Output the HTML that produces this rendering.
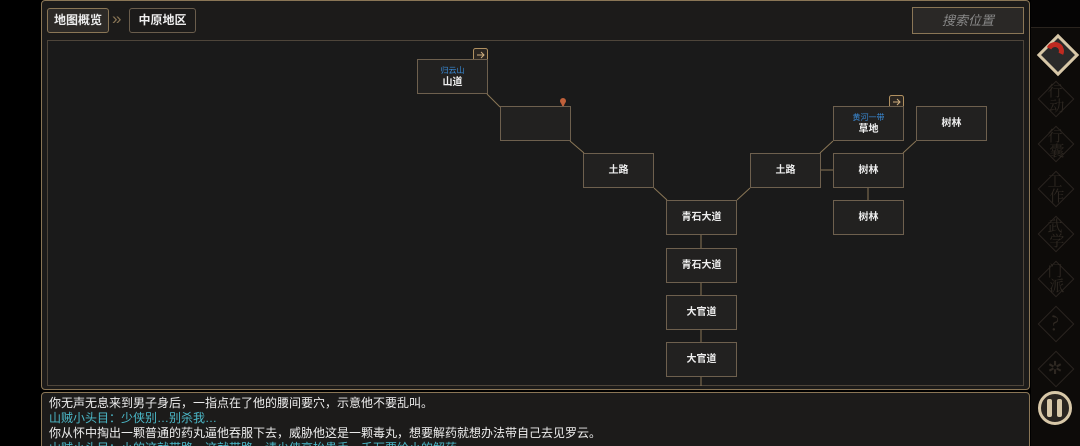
<!DOCTYPE html><html><head><meta charset="utf-8"><style>
html,body{margin:0;width:1080px;height:446px;overflow:hidden}
body{background:#000;position:relative;font-family:"Liberation Sans","Noto Sans CJK SC",sans-serif;}
.a{position:absolute;box-sizing:border-box}
.n{position:absolute;box-sizing:border-box;width:71px;height:35px;background:#222120;border:1px solid #6e604e;color:#eee;font-size:10px;font-weight:bold;display:flex;flex-direction:column;align-items:center;justify-content:center;line-height:13px}
.n b{color:#3a8ad6;font-weight:normal;font-size:8px;line-height:11px}
.d{position:absolute;left:1043px;width:24px;height:24px;transform:rotate(45deg);border:1px solid #2a2420}
.s{position:absolute;left:1040px;width:30px;text-align:center;color:#2e2822;font-size:15px;font-family:"Noto Serif CJK SC",serif;line-height:15px}
</style></head><body>
<div class="a" style="left:41px;top:0;width:989px;height:390px;background:#1c1b1a;border:1px solid #8a7656;border-radius:4px"></div>
<div class="a" style="left:47px;top:8px;width:62px;height:25px;background:#2d2a27;border:1px solid #8a7656;border-radius:3px;color:#eee;font-size:12px;font-weight:bold;line-height:23px;text-align:center">地图概览</div>
<div class="a" style="left:112px;top:9px;color:#8a7656;font-size:17px">»</div>
<div class="a" style="left:129px;top:8px;width:67px;height:25px;background:#1c1b1a;border:1px solid #6a5d4c;border-radius:3px;color:#eee;font-size:12px;font-weight:bold;line-height:23px;text-align:center">中原地区</div>
<div class="a" style="left:912px;top:7px;width:112px;height:27px;background:#2a2826;border:1px solid #8a7656;color:#888;font-size:13px;line-height:25px;text-align:center;font-style:italic">搜索位置</div>
<div class="a" style="left:47px;top:40px;width:977px;height:346px;background:#1a1a1a;border:1px solid #4e453a"></div>
<svg class="a" style="left:0;top:0" width="1080" height="446"><g stroke="#8a7656" stroke-width="1" fill="none">
<path d="M487 94L500 107M570 141L584 153M654 188L667 200M737 200L750 188M820 153L833 141M903 153L916 141M820 170H833M868 188V200M701 235V248M701 283V295M701 330V342M701 377V386"/>
<rect x="473.5" y="48.5" width="14" height="14" rx="2" fill="#2a2520" stroke="#b09060"/>
<rect x="889.5" y="95.5" width="14" height="14" rx="2" fill="#2a2520" stroke="#b09060"/>
<path d="M477 55h7M481 52l3 3-3 3M893 102h7M897 99l3 3-3 3" stroke="#d0b080"/>
<circle cx="563" cy="101" r="3" fill="#c0603a" stroke="none"/><path d="M561 103l2 5 2-5" fill="#c0603a" stroke="none"/>
</g></svg>
<div class="n" style="left:417px;top:59px"><b>归云山</b>山道</div>
<div class="n" style="left:500px;top:106px"></div>
<div class="n" style="left:583px;top:153px">土路</div>
<div class="n" style="left:666px;top:200px">青石大道</div>
<div class="n" style="left:666px;top:248px">青石大道</div>
<div class="n" style="left:666px;top:295px">大官道</div>
<div class="n" style="left:666px;top:342px">大官道</div>
<div class="n" style="left:750px;top:153px">土路</div>
<div class="n" style="left:833px;top:106px"><b>黄河一带</b>草地</div>
<div class="n" style="left:916px;top:106px">树林</div>
<div class="n" style="left:833px;top:153px">树林</div>
<div class="n" style="left:833px;top:200px">树林</div>
<div class="a" style="left:41px;top:392px;width:989px;height:60px;background:#1c1b1a;border:1px solid #8a7656;border-radius:4px;padding:3px 0 0 7px;font-size:12px;line-height:15px;color:#eee;white-space:nowrap">
你无声无息来到男子身后，一指点在了他的腰间要穴，示意他不要乱叫。<br><span style="color:#4bb8c8">山贼小头目：少侠别…别杀我…</span><br>你从怀中掏出一颗普通的药丸逼他吞服下去，威胁他这是一颗毒丸，想要解药就想办法带自己去见罗云。<br><span style="color:#4bb8c8">山贼小头目：小的这就带路，这就带路…请少侠高抬贵手，千万要给小的解药。</span></div>
<div class="a" style="left:1031px;top:0;width:49px;height:446px;background:#0d0b09"></div>
<div class="a" style="left:1031px;top:0;width:49px;height:28px;background:#050404;border-bottom:1px solid #2a241e"></div>
<div class="d" style="top:40px;background:#2a2a2a;border:3px solid #d8c8a8"></div>
<div class="a" style="left:1046px;top:42px;width:18px;height:18px;border-radius:50%;border:5px solid #c02a20;border-left-color:transparent;border-bottom-color:transparent;transform:rotate(-20deg)"></div>
<div class="d" style="top:86px"></div><div class="s" style="top:83px">行<br>&nbsp;动</div>
<div class="d" style="top:131px"></div><div class="s" style="top:128px">行<br>&nbsp;囊</div>
<div class="d" style="top:176px"></div><div class="s" style="top:173px">工<br>&nbsp;作</div>
<div class="d" style="top:221px"></div><div class="s" style="top:218px">武<br>&nbsp;学</div>
<div class="d" style="top:266px"></div><div class="s" style="top:263px">门<br>&nbsp;派</div>
<div class="d" style="top:311px"></div><div class="s" style="top:314px;font-size:20px">?</div>
<div class="d" style="top:356px"></div><div class="s" style="top:360px;font-size:18px">✲</div>
<div class="a" style="left:1038px;top:391px;width:34px;height:34px;border-radius:50%;background:#2a2520;border:3px solid #d8c8a8"></div>
<div class="a" style="left:1047px;top:399px;width:5px;height:18px;background:#d8c8a8;border-radius:2px"></div>
<div class="a" style="left:1057px;top:399px;width:5px;height:18px;background:#d8c8a8;border-radius:2px"></div>
</body></html>
